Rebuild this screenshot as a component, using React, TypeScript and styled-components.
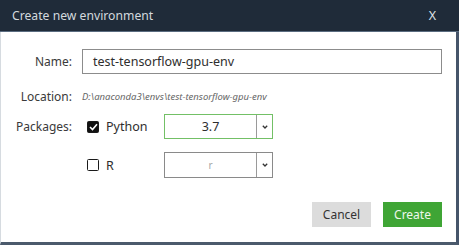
import React from "react";
import styled, { createGlobalStyle } from "styled-components";

const Global = createGlobalStyle`
  html, body { margin: 0; padding: 0; background: #ffffff; }
  * { box-sizing: border-box; }
`;

const Window = styled.div`
  width: 459px;
  height: 245px;
  display: flex;
  flex-direction: column;
  background: #ffffff;
  border-left: 1px solid #d6dbe0;
  border-right: 3px solid #46556a;
  border-bottom: 3px solid #4b5a6c;
  font-family: "Noto Sans", "Open Sans", sans-serif;
  color: #333333;
`;

const TitleBar = styled.div`
  height: 32px;
  flex: none;
  display: flex;
  align-items: center;
  justify-content: space-between;
  padding: 0 23px 0 12px;
  background: #1f2b39;
  border-bottom: 1px solid #5a6c80;
  color: #d3d9de;
  font-size: 12.2px;
  margin-left: -1px;
  margin-right: -3px;
`;

const Close = styled.span`
  font-size: 12.5px;
  color: #dfe3e7;
`;

const Body = styled.div`
  flex: 1;
  display: flex;
  flex-direction: column;
  padding: 17px 14px 0 0;
`;

const Row = styled.div<{ $h: number; $mt: number }>`
  display: grid;
  grid-template-columns: 71px 1fr;
  column-gap: 10px;
  align-items: center;
  height: ${(p) => p.$h}px;
  margin-top: ${(p) => p.$mt}px;
`;

const Label = styled.div`
  text-align: right;
  font-size: 12px;
  color: #3a3a3a;
`;

const TextInput = styled.div`
  height: 100%;
  border: 1px solid #8c8c8c;
  display: flex;
  align-items: center;
  padding-left: 10px;
  font-size: 12.5px;
  color: #2e2e2e;
`;

const Path = styled.div`
  font-size: 9.5px;
  font-style: italic;
  color: #666666;
`;

const PkgLine = styled.div`
  display: flex;
  align-items: center;
  height: 100%;
  padding-left: 5px;
`;

const Check = styled.span<{ $on: boolean }>`
  width: 12px;
  height: 12px;
  border-radius: 1.5px;
  display: inline-flex;
  align-items: center;
  justify-content: center;
  background: ${(p) => (p.$on ? "#111111" : "#ffffff")};
  border: 1.6px solid #1a1a1a;
  flex: none;
`;

const PkgName = styled.span`
  font-size: 12.5px;
  color: #2e2e2e;
  margin-left: 7px;
  width: 58px;
`;

const Select = styled.div<{ $active: boolean }>`
  width: 109px;
  height: 100%;
  display: flex;
  border: 1px solid ${(p) => (p.$active ? "#73c066" : "#8a8a8a")};
`;

const SelectValue = styled.div<{ $muted: boolean }>`
  flex: 1;
  display: flex;
  align-items: center;
  justify-content: center;
  font-size: ${(p) => (p.$muted ? "10px" : "12.5px")};
  color: ${(p) => (p.$muted ? "#a8a8a8" : "#2e2e2e")};
`;

const Arrow = styled.div`
  width: 16px;
  border-left: 1px solid #9a9a9a;
  display: flex;
  align-items: center;
  justify-content: center;
`;

const Footer = styled.div`
  display: flex;
  justify-content: flex-end;
  gap: 12px;
  margin-top: 24px;
  height: 25px;
`;

const Button = styled.div<{ $primary?: boolean }>`
  width: 59px;
  height: 25px;
  display: flex;
  align-items: center;
  justify-content: center;
  font-size: 12px;
  background: ${(p) => (p.$primary ? "#3fa535" : "#dcdcdc")};
  color: ${(p) => (p.$primary ? "#eef7ec" : "#333333")};
`;

const Chevron = () => (
  <svg width="6" height="4" viewBox="0 0 6 4">
    <polyline points="0.8,0.8 3,3 5.2,0.8" fill="none" stroke="#333" strokeWidth="1.3" />
  </svg>
);

const Tick = () => (
  <svg width="9" height="8" viewBox="0 0 9 8">
    <polyline points="1,4 3.5,6.5 8,1.2" fill="none" stroke="#fff" strokeWidth="1.6" />
  </svg>
);

const Pkg = ({ name, on, value }: { name: string; on: boolean; value: string }) => (
  <PkgLine>
    <Check $on={on}>{on && <Tick />}</Check>
    <PkgName>{name}</PkgName>
    <Select $active={on}>
      <SelectValue $muted={!on}>{value}</SelectValue>
      <Arrow>
        <Chevron />
      </Arrow>
    </Select>
  </PkgLine>
);

export default function App() {
  return (
    <>
      <Global />
      <Window>
        <TitleBar>
          <span>Create new environment</span>
          <Close>X</Close>
        </TitleBar>
        <Body>
          <Row $h={25} $mt={0}>
            <Label>Name:</Label>
            <TextInput>test-tensorflow-gpu-env</TextInput>
          </Row>
          <Row $h={20} $mt={12}>
            <Label>Location:</Label>
            <Path>D:\anaconda3\envs\test-tensorflow-gpu-env</Path>
          </Row>
          <Row $h={25} $mt={8}>
            <Label>Packages:</Label>
            <Pkg name="Python" on value="3.7" />
          </Row>
          <Row $h={26} $mt={13}>
            <Label />
            <Pkg name="R" on={false} value="r" />
          </Row>
          <Footer>
            <Button>Cancel</Button>
            <Button $primary>Create</Button>
          </Footer>
        </Body>
      </Window>
    </>
  );
}
